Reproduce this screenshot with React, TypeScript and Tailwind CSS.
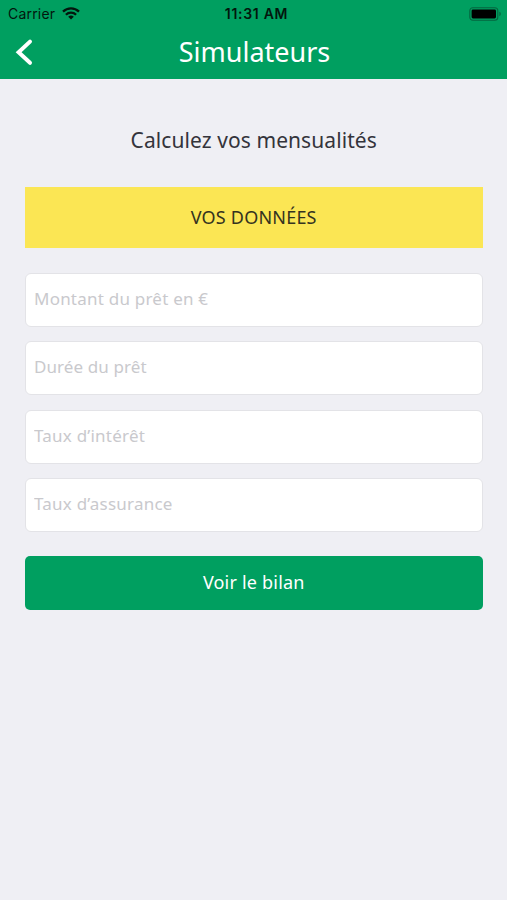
import { useState } from "react";

const FIELDS = [
  { id: "amount", placeholder: "Montant du prêt en €", spacing: "tracking-[0.22px]" },
  { id: "duration", placeholder: "Durée du prêt", spacing: "tracking-[0.09px]" },
  { id: "interest", placeholder: "Taux d’intérêt", spacing: "tracking-[0.22px]" },
  { id: "insurance", placeholder: "Taux d’assurance", spacing: "tracking-[0.22px]" },
];

function WifiIcon() {
  return (
    <svg width="18" height="13" viewBox="0 0 18 13" fill="none" stroke="#03160d" strokeWidth="2.3">
      <path d="M1 4.7a11.5 11.5 0 0 1 16 0" />
      <path d="M3.9 7.8a7.3 7.3 0 0 1 10.2 0" />
      <path d="M9 12.6 6.2 9.8a4 4 0 0 1 5.6 0z" fill="#03160d" stroke="none" />
    </svg>
  );
}

function BatteryIcon() {
  return (
    <svg width="33" height="14" viewBox="0 0 33 14" fill="none">
      <rect x="0.8" y="0.8" width="28" height="12.4" rx="3" stroke="#04663f" strokeWidth="1.1" />
      <rect x="2.6" y="2.5" width="24.4" height="9" rx="1.4" fill="#000" />
      <path d="M30.4 4.8c1.8.6 1.8 3.8 0 4.4z" fill="#04663f" />
    </svg>
  );
}

function StatusBar() {
  return (
    <div className="grid h-[27px] grid-cols-3 items-center font-['Inter',sans-serif] text-[14px] text-[#03160d]">
      <div className="flex items-center gap-[7px] pl-2">
        <span className="tracking-[0.2px]">Carrier</span>
        <WifiIcon />
      </div>
      <span className="pl-[6px] text-center font-semibold tracking-[0.7px]">11:31 AM</span>
      <div className="flex justify-end pr-[5px]">
        <BatteryIcon />
      </div>
    </div>
  );
}

function Header() {
  return (
    <header className="h-[79px] bg-[#009f60]">
      <StatusBar />
      <div className="grid h-[50px] grid-cols-[50px_1fr_50px] items-center text-white">
        <button type="button" aria-label="Retour" className="pl-[14px]">
          <svg width="19" height="28" viewBox="0 0 19 28" fill="none" stroke="currentColor" strokeWidth="4">
            <path d="M16 3.6 4.6 14.2 16 24.8" strokeLinecap="round" />
          </svg>
        </button>
        <h1 className="pl-[2px] text-center text-[27px] leading-[50px]">Simulateurs</h1>
      </div>
    </header>
  );
}

export default function App() {
  const [values, setValues] = useState<Record<string, string>>({});

  return (
    <div className="flex h-screen flex-col overflow-hidden bg-[#efeff4] font-['Noto_Sans',sans-serif]">
      <Header />
      <main className="pr-[24.5px] pl-[25px] pt-[46px]">
        <h2 className="text-center text-[21px] leading-[30px] tracking-[0.08px] text-[#34343b]">
          Calculez vos mensualités
        </h2>
        <div className="mt-[32.4px] flex h-[61px] items-center justify-center bg-[#fbe654] text-[18px] tracking-[0.2px] text-[#34331f]">
          VOS DONNÉES
        </div>
        <form className="mt-[24.6px]" onSubmit={(e) => e.preventDefault()}>
          <div className="flex flex-col gap-[14.3px]">
            {FIELDS.map(({ id, placeholder, spacing }) => (
              <input
                key={id}
                value={values[id] ?? ""}
                onChange={(e) => setValues({ ...values, [id]: e.target.value })}
                placeholder={placeholder}
                className={`h-[54px] w-full rounded-[6px] border border-[#e3e3e7] bg-white px-2 pb-[3px] text-[17px] text-[#34343b] placeholder:text-[#c9c9cd] ${spacing}`}
              />
            ))}
          </div>
          <button
            type="submit"
            className="mt-[24.5px] h-[54px] w-full rounded-[5px] bg-[#009f60] pb-[1px] text-[18px] tracking-[0.2px] text-white"
          >
            Voir le bilan
          </button>
        </form>
      </main>
    </div>
  );
}
